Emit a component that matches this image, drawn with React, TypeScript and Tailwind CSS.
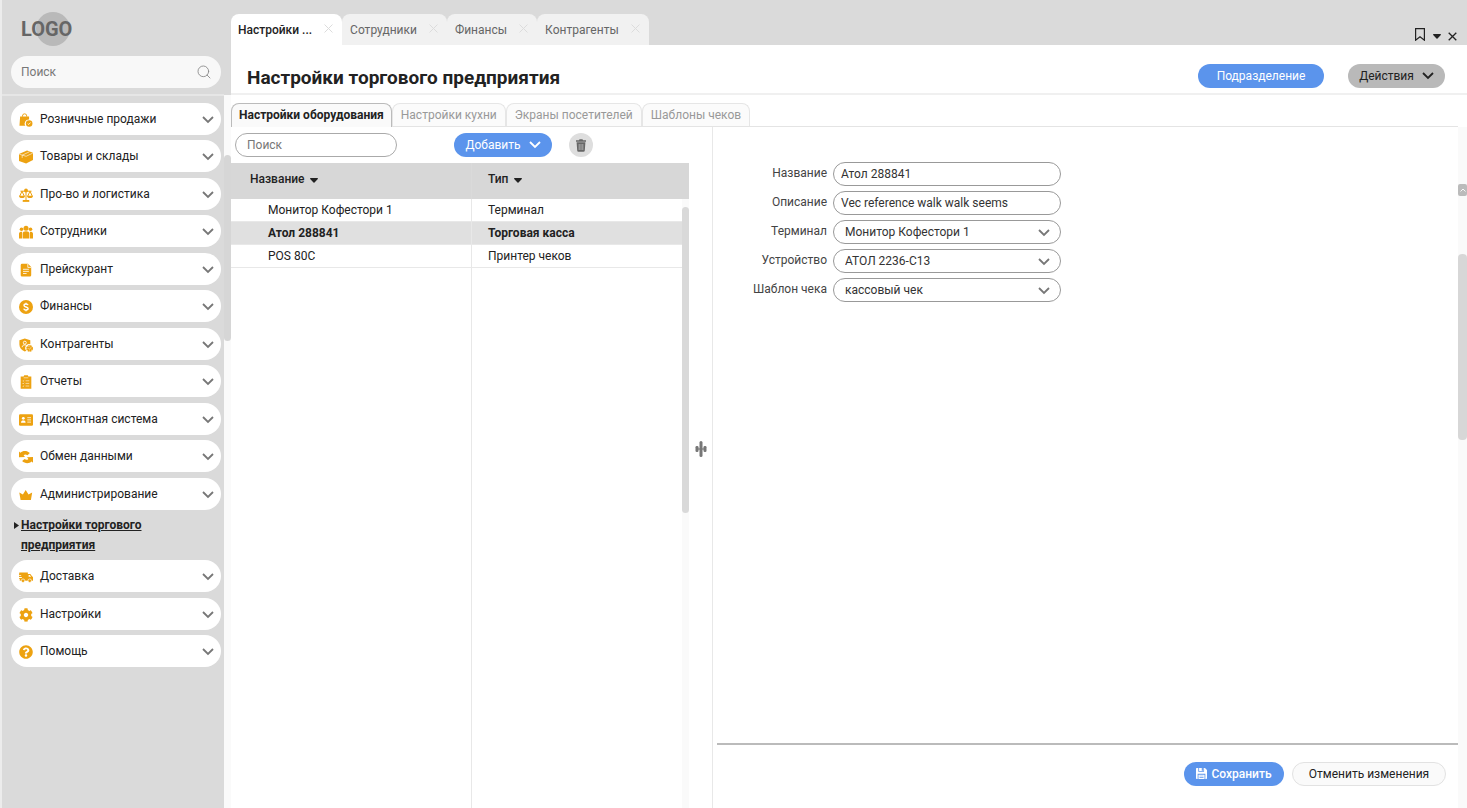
import React from "react";
import type { IconType } from "react-icons";
import { FaCog, FaQuestionCircle } from "react-icons/fa";
import { FiSearch } from "react-icons/fi";

type GlyphProps = { className?: string };

const BagIcon = ({ className }: GlyphProps) => (
  <svg viewBox="0 0 14 15" className={className} fill="currentColor">
    <path d="M3.2 4V3.2a2.3 2.3 0 0 1 4.600 0V4" fill="none" stroke="currentColor" strokeWidth="1" />
    <path d="M.7 3.800h9.600v3.200a4.300 4.300 0 0 0-4 6.700H0z" />
    <circle cx="10.400" cy="11.200" r="3.500" />
    <path d="M8.800 11.300l1.100 1 2-2.100" fill="none" stroke="#fff" strokeWidth=".9" />
  </svg>
);

const BoxIcon = ({ className }: GlyphProps) => (
  <svg viewBox="0 0 14 14" className={className} fill="currentColor">
    <path d="M0 3.900L8 .6l6 2.200v7.300l-6.900 3.500L0 11z" />
    <path d="M.2 4.200l6.900 2.100 6.700-3.200M3.200 5.200l7.200-3.400M3.200 5.200v2.700" fill="none" stroke="#fff" strokeWidth=".6" />
  </svg>
);

const ScalesIcon = ({ className }: GlyphProps) => (
  <svg viewBox="0 0 14 14" className={className} fill="none" stroke="currentColor" strokeWidth="1">
    <path d="M7 1v11M3.500 13h7M1.500 3.200h11M3 3.200L.8 8M3 3.200L5.200 8M11 3.200L8.800 8M11 3.200L13.200 8" />
    <path d="M0 7.800h6a3 2.300 0 0 1-6 0zM8 7.800h6a3 2.300 0 0 1-6 0zM4 12h6v1.700H4z" fill="currentColor" stroke="none" />
    <circle cx="7" cy="2.500" r="1.900" fill="currentColor" stroke="none" />
  </svg>
);

const PeopleIcon = ({ className }: GlyphProps) => (
  <svg viewBox="0 0 14 14" className={className} fill="currentColor">
    <circle cx="7" cy="3.200" r="2.500" />
    <circle cx="2.500" cy="4.300" r="1.800" />
    <circle cx="11.500" cy="4.300" r="1.800" />
    <path d="M3.700 13.500V8.300C3.700 6.900 5 6.200 7 6.200s3.300.7 3.300 2.100v5.200zM0 13.500V8.800c0-1.500.9-2.100 3.100-2.100v6.800zM14 13.500V8.800c0-1.500-.9-2.100-3.100-2.100v6.800z" />
  </svg>
);

const DocIcon = ({ className }: GlyphProps) => (
  <svg viewBox="0 0 14 14" className={className} fill="currentColor">
    <path d="M3 .8h6L12.200 4v8.200a1.300 1.300 0 0 1-1.300 1.300H3A1.300 1.300 0 0 1 1.700 12.200V2A1.300 1.300 0 0 1 3 .8z" />
    <path d="M8.800 1v3.400h3.300M4 6.300h5.900M4 8.400h5.900M4 10.500h3.600" fill="none" stroke="#fff" strokeWidth=".8" />
  </svg>
);

const CoinIcon = ({ className }: GlyphProps) => (
  <svg viewBox="0 0 14 14" className={className}>
    <circle cx="7" cy="7" r="7" fill="currentColor" />
    <path
      d="M9 5.200C8.800 4.300 8 4 7 4c-1.200 0-2 .6-2 1.500C5 7.500 9.100 6.500 9.100 8.600 9.100 9.500 8.200 10 7 10c-1.200 0-2-.5-2.200-1.400M7 2.700V4m0 6v1.300"
      fill="none"
      stroke="#fff"
      strokeWidth="1.400"
    />
  </svg>
);

const PartnerIcon = ({ className }: GlyphProps) => (
  <svg viewBox="0 0 14 14" className={className}>
    <path d="M5.800 .5l5.500 1.800v4a3.900 3.900 0 0 0-3.900 6.500l-1.600.7C2.500 12.300.4 9.800.4 6.500V2.300z" fill="currentColor" />
    <path d="M3.200 9.200c.2-1.700 1-2.300 2.600-2.300.9 0 1.500.2 1.900.6" fill="none" stroke="#fff" strokeWidth=".9" />
    <circle cx="5.800" cy="4.700" r="1.500" fill="none" stroke="#fff" strokeWidth=".9" />
    <circle cx="10.600" cy="10.400" r="2.500" fill="none" stroke="currentColor" strokeWidth="1.800" strokeDasharray="1.600 .4" />
    <circle cx="10.600" cy="10.400" r="2" fill="currentColor" />
    <path d="M9.600 10.400l.8.800 1.400-1.400" fill="none" stroke="#fff" strokeWidth=".7" />
  </svg>
);

const ReportIcon = ({ className }: GlyphProps) => (
  <svg viewBox="0 0 14 15" className={className}>
    <path d="M1.300 1.500H4.500L5 .3h4l.5 1.200h3.200V14.700H1.300z" fill="currentColor" />
    <path d="M4.500 3h5M6.500 6.200h4M6.500 9h4M6.500 11.800h4M3.200 6.200l.6.600 1.300-1.200M3.200 9l.6.600 1.300-1.200M3.200 11.800l.6.600 1.300-1.200" fill="none" stroke="#fff" strokeWidth=".6" />
  </svg>
);

const CardIcon = ({ className }: GlyphProps) => (
  <svg viewBox="0 0 14 14" className={className}>
    <rect x="0" y="1.300" width="14" height="11.400" rx="1.200" fill="currentColor" />
    <circle cx="4.300" cy="5.300" r="1.400" fill="#fff" />
    <path d="M2 9.800c0-1.800.7-2.400 2.300-2.400s2.300.6 2.300 2.400z" fill="#fff" />
    <path d="M8.300 4.700H12M8.300 6.900H12M8.300 9.100H12" stroke="#fff" strokeWidth=".8" />
  </svg>
);

const ExchangeIcon = ({ className }: GlyphProps) => (
  <svg viewBox="0 0 14 14" className={className} fill="currentColor">
    <path d="M0 1.500l1.400 1.200C3.700.5 8 .3 10.900 3.100L8.400 5.200C7 4.200 5.700 4.200 4.600 5.300L6 7 0 7.300z" />
    <path d="M14 12.700l-1.400-1.200c-2.300 2.200-6.600 2.400-9.500-.4l2.500-2.100c1.400 1 2.700 1 3.800-.1L8 7.200l6-.3z" />
  </svg>
);

const CrownIcon = ({ className }: GlyphProps) => (
  <svg viewBox="0 0 14 14" className={className} fill="currentColor">
    <path d="M.3 4.500L3.900 6.500 6.700 2 9.500 6.500l3.700-2-1.300 7.600H1.600z" />
  </svg>
);

const VanIcon = ({ className }: GlyphProps) => (
  <svg viewBox="0 0 15 14" className={className}>
    <path d="M.3 2.300h9.200v1.500h2.600L14.200 6.500l.8.600v4H.8V9H0V8h3V7H0V6h2.300V5H0z" fill="currentColor" />
    <circle cx="4.300" cy="11" r="1.900" fill="currentColor" stroke="#fff" strokeWidth=".7" />
    <circle cx="11.500" cy="11" r="1.900" fill="currentColor" stroke="#fff" strokeWidth=".7" />
    <path d="M10.300 4.900h1.300l1.400 1.800h-2.700z" fill="#fff" />
  </svg>
);

const TrashIcon = ({ className }: GlyphProps) => (
  <svg viewBox="0 0 12 13" className={className} fill="currentColor">
    <path d="M1 1.300h3L4.500.3h3L8 1.300h3v1.400H1zM1.600 3.300h8.800l-.6 8.200a1.300 1.300 0 0 1-1.300 1.200h-5a1.300 1.300 0 0 1-1.300-1.200z" />
    <path d="M4.200 5v6M6 5v6M7.800 5v6" stroke="#dedede" strokeWidth=".6" />
  </svg>
);

const SaveIcon = ({ className }: GlyphProps) => (
  <svg viewBox="0 0 12 12" className={className} fill="currentColor">
    <path d="M.8 0h1.700v4h6.300V0h1l2.200 2.200v9a.8.8 0 0 1-.8.800h-1V6.400H1.800V12h-1a.8.8 0 0 1-.8-.8V.8A.8.8 0 0 1 .8 0z" />
    <path d="M3.400 0h2.900v3.100h1.200V0H8v3.400H3.400zM2.700 7.300h6.600V12H2.700zM3.800 8.500h4.400v.6H3.800zM3.800 10.200h4.400v.6H3.800z" fillRule="evenodd" />
  </svg>
);

const SplitterIcon = ({ className }: GlyphProps) => (
  <svg viewBox="0 0 12 16" className={className} fill="currentColor">
    <rect x="4.500" y="0" width="3" height="16" rx="1.500" />
    <rect x="0.500" y="5" width="3" height="6" rx="1.200" />
    <rect x="8.500" y="5" width="3" height="6" rx="1.200" />
    <rect x="2" y="7" width="8" height="2" opacity=".6" />
  </svg>
);

const TriangleDown = ({ className }: GlyphProps) => (
  <svg viewBox="0 0 8 5" className={className} fill="currentColor">
    <path d="M.6 0h6.800c.5 0 .7.600.4 1L4.500 4.600a.7.7 0 0 1-1 0L.2 1C-.1.600.1 0 .6 0z" />
  </svg>
);

const TriangleRight = ({ className }: GlyphProps) => (
  <svg viewBox="0 0 5 7" className={className} fill="currentColor">
    <path d="M0 0l5 3.500L0 7z" />
  </svg>
);

const Chevron = ({ className }: GlyphProps) => (
  <svg viewBox="0 0 12 8" className={className} fill="none" stroke="currentColor" strokeWidth="1.800">
    <path d="M1 1l5 5 5-5" />
  </svg>
);

const ThinCross = ({ className }: GlyphProps) => (
  <svg viewBox="0 0 9 9" className={className} fill="none" stroke="currentColor" strokeWidth="1">
    <path d="M.5.5l8 8M8.500.5l-8 8" />
  </svg>
);

const BoldCross = ({ className }: GlyphProps) => (
  <svg viewBox="0 0 9 9" className={className} fill="none" stroke="currentColor" strokeWidth="1.300">
    <path d="M.7.7l7.600 7.600M8.300.7L.7 8.300" />
  </svg>
);

type Glyph = React.ComponentType<GlyphProps> | IconType;
type Section = { label: string; icon: Glyph; child?: string };

const sections: Section[] = [
  { label: "Розничные продажи", icon: BagIcon },
  { label: "Товары и склады", icon: BoxIcon },
  { label: "Про-во и логистика", icon: ScalesIcon },
  { label: "Сотрудники", icon: PeopleIcon },
  { label: "Прейскурант", icon: DocIcon },
  { label: "Финансы", icon: CoinIcon },
  { label: "Контрагенты", icon: PartnerIcon },
  { label: "Отчеты", icon: ReportIcon },
  { label: "Дисконтная система", icon: CardIcon },
  { label: "Обмен данными", icon: ExchangeIcon },
  { label: "Администрирование", icon: CrownIcon, child: "Настройки торгового предприятия" },
  { label: "Доставка", icon: VanIcon },
  { label: "Настройки", icon: FaCog },
  { label: "Помощь", icon: FaQuestionCircle },
];

const Sidebar = () => (
  <aside className="flex w-[224px] shrink-0 flex-col border-l-2 border-[#ececec] bg-[#dadada]">
    <div className="pt-3 pr-[3px] pb-[6px] pl-[9px]">
      <a href="#" className="relative ml-[10px] flex h-[34px] w-[52px] items-center text-[20px] font-bold text-[#666]">
        <span className="absolute left-[15px] size-[34px] rounded-full bg-[#b9b9b9]" />
        <span className="relative">LOGO</span>
      </a>
      <label className="mt-[10px] flex h-8 items-center rounded-full bg-[#f8f8f8] pr-[9px] pl-[10px]">
        <input aria-label="Поиск" placeholder="Поиск" className="min-w-0 flex-1 bg-transparent outline-none placeholder:text-[#777]" />
        <FiSearch className="size-4 text-[#888]" strokeWidth={1.300} />
      </label>
    </div>
    <nav className="border-t-2 border-[#e6e6e6] pt-[7px]">
      <ul>
        {sections.map(({ label, icon: Icon, child }) => (
          <li key={label} className="pr-[3px] pl-[9px] odd:mb-[5px] even:mb-[6px]">
            <button type="button" className="flex h-8 w-full items-center rounded-full bg-white pr-[7px] pl-2 text-left">
              <Icon className="mt-px size-[14px] text-[#eda211]" />
              <span className="ml-[7px] flex-1">{label}</span>
              <Chevron className="mt-[2px] w-[12px] text-[#777]" />
            </button>
            {child && (
              <a href="#" className="flex pt-[5px] pr-8 pl-[3px] font-bold leading-5 underline">
                <TriangleRight className="mt-[7px] mr-[2px] h-[7px] w-[5px] shrink-0" />
                <span>{child}</span>
              </a>
            )}
          </li>
        ))}
      </ul>
    </nav>
  </aside>
);

const windowTabs = ["Настройки ...", "Сотрудники", "Финансы", "Контрагенты"];

const WindowTabs = () => (
  <div className="flex h-[45px] items-end justify-between bg-[#dadada] pr-[10px]">
    <div className="flex" role="tablist">
      {windowTabs.map((tab, i) => (
        <div
          key={tab}
          className={
            i === 0
              ? "flex h-[31px] items-center rounded-t-lg bg-white pr-[9px] pl-[7px] font-medium text-[#222]"
              : "flex h-[31px] items-center rounded-t-lg bg-[#f1f1f1] pr-[9px] pl-2 text-[#666]"
          }
        >
          <button type="button" role="tab" aria-selected={i === 0}>
            {tab}
          </button>
          <button type="button" aria-label="Закрыть вкладку" className="mb-[2px] ml-3 text-[#dcdcdc]">
            <ThinCross className="size-[9px]" />
          </button>
        </div>
      ))}
    </div>
    <div className="mb-px flex items-center">
      <button type="button" aria-label="Закладка">
        <svg viewBox="0 0 10 13" className="mb-[3px] h-[13px] w-[10px]" fill="none" stroke="#222" strokeWidth="1.200">
          <path d="M.6.600h8.800v11.600L5 8.800.6 12.200z" />
        </svg>
      </button>
      <button type="button" aria-label="Меню" className="ml-2">
        <TriangleDown className="w-2" />
      </button>
      <button type="button" aria-label="Закрыть" className="ml-[7px]">
        <BoldCross className="size-[9px]" />
      </button>
    </div>
  </div>
);

const sectionTabs = ["Настройки оборудования", "Настройки кухни", "Экраны посетителей", "Шаблоны чеков"];

const SectionTabs = () => (
  <div className="mr-[9px] flex border-b border-[#e4e4e4] pt-2" role="tablist">
    {sectionTabs.map((tab, i) => (
      <button
        key={tab}
        type="button"
        role="tab"
        aria-selected={i === 0}
        className={
          i === 0
            ? "-mb-px h-6 rounded-t-lg border border-b-0 border-[#bbb] bg-[#fafafa] px-[7px] pb-px font-bold"
            : "h-[23px] rounded-t-lg border border-b-0 border-[#e6e6e6] bg-[#fbfbfb] px-2 text-[#999]"
        }
      >
        {tab}
      </button>
    ))}
  </div>
);

const devices = [
  { name: "Монитор Кофестори 1", type: "Терминал" },
  { name: "Атол 288841", type: "Торговая касса" },
  { name: "POS 80C", type: "Принтер чеков" },
];

const DeviceList = () => (
  <section className="flex w-[482px] shrink-0 flex-col border-r border-[#e8e8e8]">
    <div className="flex h-9 items-center pl-1">
      <input
        aria-label="Поиск оборудования"
        placeholder="Поиск"
        className="h-6 w-[162px] rounded-full border border-[#aaa] px-[11px] outline-none placeholder:text-[#777]"
      />
      <button type="button" className="ml-[57px] flex h-6 w-[98px] items-center justify-center gap-2 rounded-full bg-[#5b94ec] text-white">
        Добавить
        <Chevron className="w-[12px]" />
      </button>
      <button type="button" aria-label="Удалить" className="ml-[17px] flex size-6 items-center justify-center rounded-full bg-[#dedede] text-[#666]">
        <TrashIcon className="w-[12px]" />
      </button>
    </div>
    <div className="flex flex-1">
      <div className="flex flex-1 flex-col">
        <table className="w-full table-fixed border-separate border-spacing-0 text-left">
          <thead>
            <tr className="h-9 bg-[#d7d7d7]">
              <th className="w-[241px] border-r border-[#dadada] pb-[5px] pl-[19px] font-medium">
                <button type="button" className="flex items-center gap-[5px]">
                  Название <TriangleDown className="mt-1 w-2" />
                </button>
              </th>
              <th className="pb-[5px] pl-4 font-medium">
                <button type="button" className="flex items-center gap-[6px]">
                  Тип <TriangleDown className="mt-1 w-2" />
                </button>
              </th>
            </tr>
          </thead>
          <tbody>
            {devices.map((device, i) => (
              <tr key={device.name} className={i === 1 ? "h-[23px] bg-[#e0e0e0] font-bold" : "h-[23px]"}>
                <td className="border-r border-b border-[#e8e8e8] pl-[37px]">{device.name}</td>
                <td className="border-b border-[#e8e8e8] pl-4">{device.type}</td>
              </tr>
            ))}
          </tbody>
        </table>
        <div className="w-[241px] flex-1 border-r border-[#e8e8e8]" />
      </div>
      <div className="w-[7px] bg-[#fafafa]">
        <div className="h-9 bg-[#d7d7d7]" />
        <div className="mt-2 h-[306px] rounded-full bg-[#d9d9d9]" />
      </div>
      <div className="flex w-[23px] justify-center pt-[278px]">
        <SplitterIcon className="h-4 w-[12px] text-[#777]" />
      </div>
    </div>
  </section>
);

type Field = { id: string; label: string; value: string; select?: boolean };

const fields: Field[] = [
  { id: "name", label: "Название", value: "Атол 288841" },
  { id: "description", label: "Описание", value: "Vec reference walk walk seems" },
  { id: "terminal", label: "Терминал", value: "Монитор Кофестори 1", select: true },
  { id: "device", label: "Устройство", value: "АТОЛ 2236-С13", select: true },
  { id: "template", label: "Шаблон чека", value: "кассовый чек", select: true },
];

const DeviceForm = () => (
  <form className="flex flex-1 flex-col pl-[4px]">
    <div className="flex flex-1 flex-col gap-[5px] pt-[35px]">
      {fields.map(({ id, label, value, select }) => (
        <div key={id} className="flex items-center">
          <label htmlFor={id} className="w-[110px] pb-[2px] text-right text-[#444]">
            {label}
          </label>
          {select ? (
            <span className="relative ml-[6px] w-[228px]">
              <select id={id} defaultValue={value} className="block h-6 w-full appearance-none rounded-full border border-[#999] bg-white pl-[11px] text-[#333] outline-none">
                <option>{value}</option>
              </select>
              <Chevron className="pointer-events-none absolute top-[9px] right-[11px] w-[12px] text-[#777]" />
            </span>
          ) : (
            <input id={id} defaultValue={value} className="ml-[6px] h-6 w-[228px] rounded-full border border-[#999] px-[7px] text-[#333] outline-none" />
          )}
        </div>
      ))}
    </div>
    <div className="flex h-[65px] items-center justify-end gap-2 border-t-2 border-[#bbb] pr-3 pb-[6px]">
      <button type="button" className="flex h-6 w-[100px] items-center justify-center gap-1 rounded-full bg-[#5b94ec] font-medium text-white">
        <SaveIcon className="size-[11px]" />
        Сохранить
      </button>
      <button type="button" className="h-6 w-[154px] rounded-full border border-[#e2e2e2] bg-[#fafafa]">
        Отменить изменения
      </button>
    </div>
  </form>
);

export default function App() {
  return (
    <div className="flex min-h-screen bg-white font-[Roboto,sans-serif] text-xs leading-4 text-[#222]">
      <Sidebar />
      <div className="flex w-[7px] shrink-0 flex-col bg-[#fafafa]">
        <div className="h-[95px] bg-[#dadada]" />
        <div className="mt-[60px] h-[186px] rounded-full bg-[#d6d6d6]" />
      </div>
      <main className="flex min-w-0 flex-1 flex-col">
        <WindowTabs />
        <header className="flex h-[50px] items-center border-b-2 border-[#f0f0f0] pt-[13px] pr-[22px] pl-4">
          <h1 className="mt-1 flex-1 text-[19px] leading-6 font-bold">Настройки торгового предприятия</h1>
          <button type="button" className="h-6 w-[126px] rounded-full bg-[#5b94ec] text-white">
            Подразделение
          </button>
          <button type="button" className="ml-6 flex h-6 w-[97px] items-center justify-center gap-2 rounded-full bg-[#b9b9b9]">
            Действия
            <Chevron className="w-[12px]" />
          </button>
        </header>
        <SectionTabs />
        <div className="flex flex-1">
          <DeviceList />
          <DeviceForm />
          <div className="w-[9px] bg-[#fafafa]">
            <div className="mt-[57px] flex h-3 items-center justify-center rounded-xs bg-[#bbb] text-white">
              <Chevron className="w-[6px] rotate-180" />
            </div>
            <div className="mt-[58px] h-[186px] rounded-sm bg-[#d7d7d7]" />
          </div>
        </div>
      </main>
    </div>
  );
}
